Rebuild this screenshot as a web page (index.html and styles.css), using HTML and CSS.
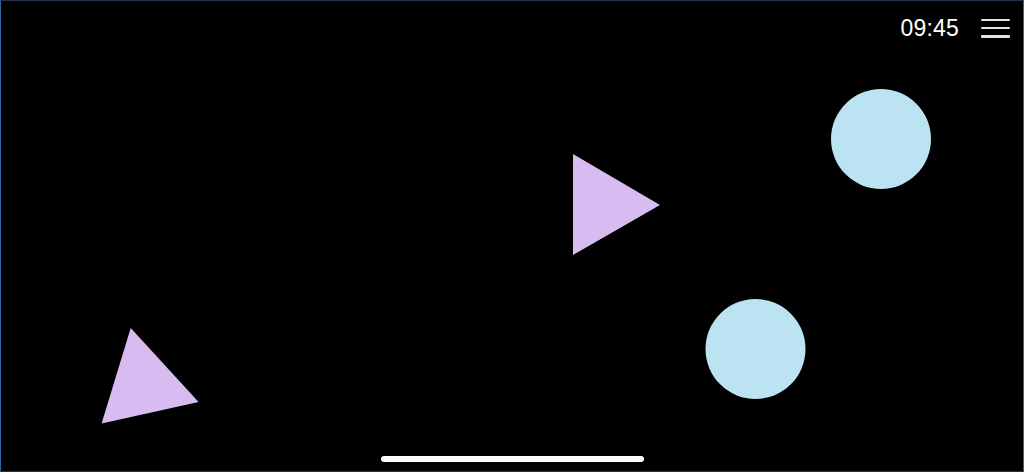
FILE: index.html
```html
<!DOCTYPE html>
<html lang="en">
<head>
<meta charset="utf-8">
<title>Shapes</title>
<link rel="stylesheet" href="styles.css">
</head>
<body>
<div class="screen">
  <header class="status">
    <span class="time">09:45</span>
    <button class="menu" aria-label="Menu">
      <span class="bar"></span>
      <span class="bar"></span>
      <span class="bar"></span>
    </button>
  </header>
  <svg class="canvas" width="1022" height="470" viewBox="1 1 1022 470" aria-hidden="true">
    <circle class="dot" cx="881" cy="139" r="50"/>
    <circle class="dot" cx="755.5" cy="349" r="50"/>
    <polygon class="tri" points="573,154 573,255 660,205"/>
    <polygon class="tri" points="130.7,328 198.6,402 101.6,423.5"/>
  </svg>
  <div class="home-indicator"></div>
</div>
</body>
</html>
```
FILE: styles.css
```css
html, body {
  margin: 0;
  padding: 0;
  background: #000;
}
.screen {
  position: relative;
  box-sizing: border-box;
  width: 1024px;
  height: 472px;
  background: #000;
  border: 1px solid #24344a;
  border-left-color: #2f63a0;
  border-right-color: #2f63a0;
  overflow: hidden;
  font-family: "Liberation Sans", Arial, sans-serif;
}
.status {
  position: relative;
  z-index: 1;
  display: flex;
  justify-content: flex-end;
  align-items: center;
  gap: 22px;
  padding: 14px 13px 0 0;
}
.time {
  color: #fff;
  font-size: 23px;
  line-height: 26px;
  letter-spacing: 0.2px;
}
.menu {
  display: flex;
  flex-direction: column;
  justify-content: space-between;
  width: 29px;
  height: 19px;
  padding: 0;
  margin: 0;
  border: 0;
  background: none;
}
.bar {
  display: block;
  height: 2.6px;
  border-radius: 1px;
  background: #e2e2e2;
}
.canvas {
  position: absolute;
  left: 0;
  top: 0;
}
.dot {
  fill: #bce3f1;
}
.tri {
  fill: #d8bcf1;
}
.home-indicator {
  position: absolute;
  left: 380px;
  top: 455px;
  width: 263px;
  height: 6px;
  border-radius: 3px;
  background: #fff;
}
```
